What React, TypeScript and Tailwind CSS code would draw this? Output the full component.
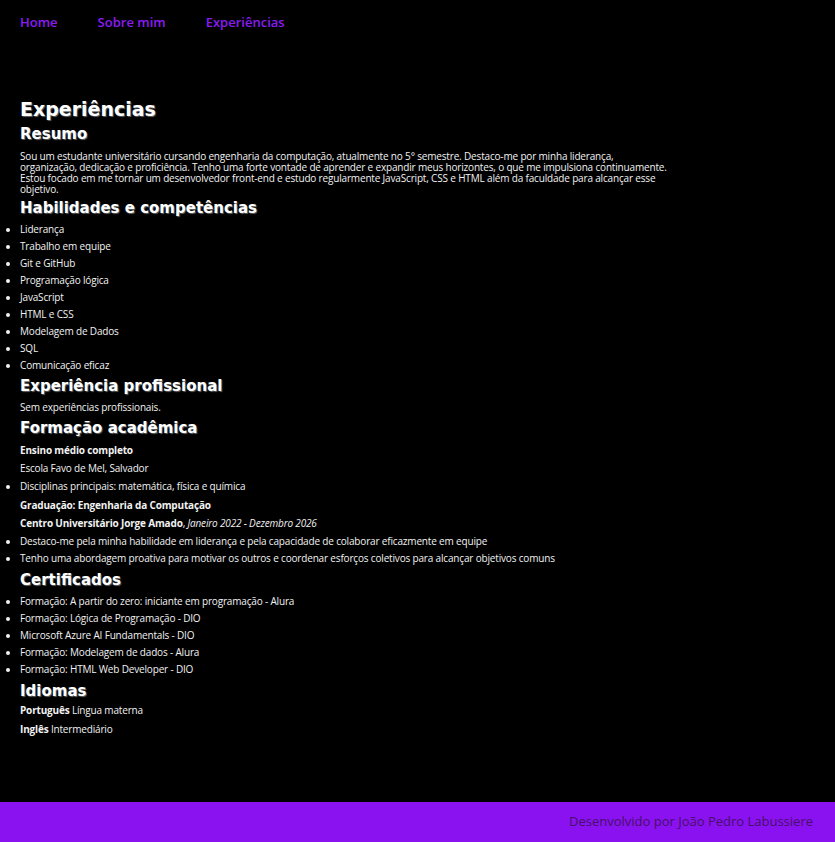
const skills = [
  "Liderança",
  "Trabalho em equipe",
  "Git e GitHub",
  "Programação lógica",
  "JavaScript",
  "HTML e CSS",
  "Modelagem de Dados",
  "SQL",
  "Comunicação eficaz",
];

const certificados = [
  "Formação: A partir do zero: iniciante em programação - Alura",
  "Formação: Lógica de Programação - DIO",
  "Microsoft Azure AI Fundamentals - DIO",
  "Formação: Modelagem de dados - Alura",
  "Formação: HTML Web Developer - DIO",
];

const Heading = ({ children }: { children: React.ReactNode }) => (
  <h2 className="h-[25px] leading-[25px] text-[15px] font-bold tracking-normal text-white font-['DejaVu_Sans',sans-serif] [text-shadow:1px_1px_1px_rgba(200,200,200,0.5)]">
    {children}
  </h2>
);

const Item = ({ children }: { children: React.ReactNode }) => (
  <li className="h-[17px] leading-[17px]">{children}</li>
);

export default function App() {
  return (
    <div className="min-h-[842px] bg-black flex flex-col font-['Open_Sans',sans-serif] text-white">
      <nav className="flex gap-10 px-5 pt-[13px] h-[96px] text-[13px] font-semibold text-[#8a1cf2] leading-[18px]">
        <a href="#">Home</a>
        <a href="#">Sobre mim</a>
        <a href="#">Experiências</a>
      </nav>

      <main className="flex-1 text-[10px] tracking-[-0.17px] text-[#f2f2f2]">
        <h1 className="px-5 h-[26px] leading-[26px] text-[19px] font-bold tracking-normal text-white font-['DejaVu_Sans',sans-serif] [text-shadow:1px_1px_1px_rgba(200,200,200,0.5)]">
          Experiências
        </h1>

        <section className="px-5">
          <Heading>Resumo</Heading>
          <p className="max-w-[652px] leading-[11px] pt-[4px] pb-[1px]">
            Sou um estudante universitário cursando engenharia da computação, atualmente no 5° semestre. Destaco-me por minha liderança, organização, dedicação e proficiência. Tenho uma forte vontade de aprender e expandir meus horizontes, o que me impulsiona continuamente. Estou focado em me tornar um desenvolvedor front-end e estudo regularmente JavaScript, CSS e HTML além da faculdade para alcançar esse objetivo.
          </p>
        </section>

        <section>
          <div className="px-5">
            <Heading>Habilidades e competências</Heading>
          </div>
          <ul className="list-disc pl-5">
            {skills.map((s) => (
              <Item key={s}>{s}</Item>
            ))}
          </ul>
        </section>

        <section>
          <div className="px-5">
            <Heading>Experiência profissional</Heading>
            <p className="h-[17px] leading-[17px]">Sem experiências profissionais.</p>
            <Heading>Formação acadêmica</Heading>
            <p className="h-[18px] leading-[18px] font-bold">Ensino médio completo</p>
            <p className="h-[18px] leading-[18px]">Escola Favo de Mel, Salvador</p>
          </div>
          <ul className="list-disc pl-5">
            <li className="h-[19px] leading-[19px]">Disciplinas principais: matemática, física e química</li>
          </ul>
          <div className="px-5">
            <p className="h-[18px] leading-[18px] font-bold">Graduação: Engenharia da Computação</p>
            <p className="h-[18px] leading-[18px]">
              <strong>Centro Universitário Jorge Amado</strong>, <em>Janeiro 2022 - Dezembro 2026</em>
            </p>
          </div>
          <ul className="list-disc pl-5 pt-[1px]">
            <Item>Destaco-me pela minha habilidade em liderança e pela capacidade de colaborar eficazmente em equipe</Item>
            <Item>Tenho uma abordagem proativa para motivar os outros e coordenar esforços coletivos para alcançar objetivos comuns</Item>
          </ul>
        </section>

        <section className="pt-[1px]">
          <div className="px-5">
            <Heading>Certificados</Heading>
          </div>
          <ul className="list-disc pl-5">
            {certificados.map((c) => (
              <Item key={c}>{c}</Item>
            ))}
          </ul>
        </section>

        <section className="px-5 pt-[1px]">
          <Heading>Idiomas</Heading>
          <p className="h-[19px] leading-[19px] -mt-[3px]">
            <strong>Português</strong> Língua materna
          </p>
          <p className="h-[19px] leading-[19px]">
            <strong>Inglês</strong> Intermediário
          </p>
        </section>
      </main>

      <footer className="h-10 bg-[#8b12f0] flex items-center justify-end pr-[22px] text-[13px] text-[#45106a]">
        Desenvolvido por João Pedro Labussiere
      </footer>
    </div>
  );
}
